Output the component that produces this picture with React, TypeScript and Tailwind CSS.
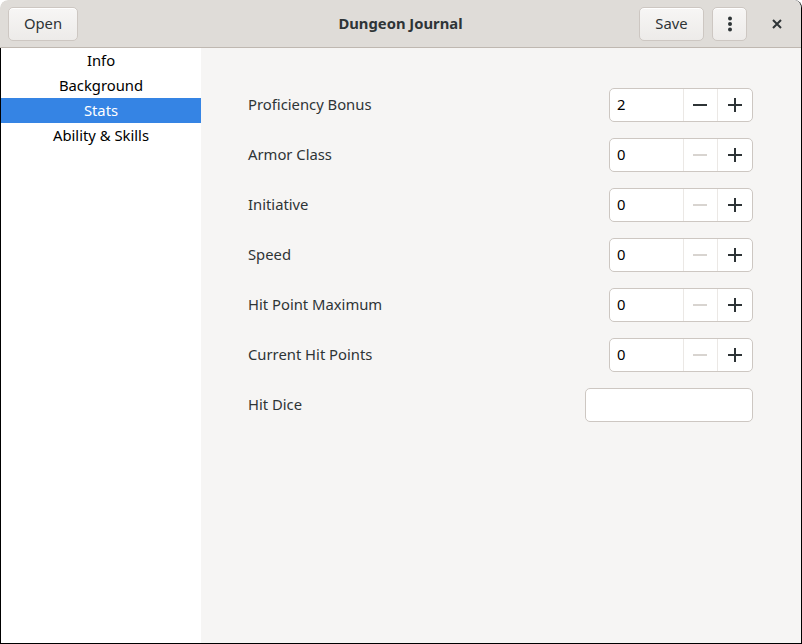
import React from "react";

const font = { fontFamily: '"Noto Sans", "Open Sans", sans-serif' };

const navItems = ["Info", "Background", "Stats", "Ability & Skills"];

const stats = [
  { label: "Proficiency Bonus", value: "2", canDecrease: true },
  { label: "Armor Class", value: "0", canDecrease: false },
  { label: "Initiative", value: "0", canDecrease: false },
  { label: "Speed", value: "0", canDecrease: false },
  { label: "Hit Point Maximum", value: "0", canDecrease: false },
  { label: "Current Hit Points", value: "0", canDecrease: false },
];

const HeaderButton = ({ children, className }: { children: React.ReactNode; className?: string }) => (
  <button
    className={`h-[34px] rounded-[5px] border border-[#cdc7c2] bg-gradient-to-b from-[#f7f6f5] to-[#edebe9] text-[14.8px] text-[#2e3436] shadow-[inset_0_1px_0_#ffffff] ${className ?? ""}`}
  >
    {children}
  </button>
);

const Minus = ({ color }: { color: string }) => (
  <svg width="16" height="16" viewBox="0 0 16 16">
    <path d="M1 8h14" stroke={color} strokeWidth="2" />
  </svg>
);

const Plus = () => (
  <svg width="16" height="16" viewBox="0 0 16 16">
    <path d="M1 8h14M8 1v14" stroke="#2e3436" strokeWidth="2" />
  </svg>
);

const SpinButton = ({ value, canDecrease }: { value: string; canDecrease: boolean }) => (
  <div className="flex h-[34px] w-[144px] rounded-[5px] border border-[#cdc7c2] bg-white">
    <div className="-mt-[1px] flex w-[73px] items-center pl-[7px] text-[14.8px] text-black">{value}</div>
    <div className="flex w-[35px] items-center justify-center border-l border-[#ebe8e5]">
      <Minus color={canDecrease ? "#2e3436" : "#d8d4d0"} />
    </div>
    <div className="flex w-[35px] items-center justify-center border-l border-[#ebe8e5]">
      <Plus />
    </div>
  </div>
);

export default function App() {
  return (
    <div style={font} className="flex h-[644px] w-[802px] flex-col overflow-hidden rounded-t-[8px] border-r border-b border-black bg-white">
      <header className="grid h-[48px] shrink-0 grid-cols-[1fr_auto_1fr] items-center rounded-t-[8px] border-b border-[#bfb8b1] bg-[#dfdcd8] pl-2 pr-[2px]">
        <div>
          <HeaderButton className="w-[70px]">Open</HeaderButton>
        </div>
        <div className="pr-[6px] text-center text-[14.8px] font-bold text-[#2e3436]">Dungeon Journal</div>
        <div className="flex items-center justify-end gap-2">
          <HeaderButton className="w-[65px]">Save</HeaderButton>
          <HeaderButton className="flex w-[35px] items-center justify-center">
            <svg width="4" height="16" viewBox="0 0 4 16" className="mx-auto">
              <circle cx="2" cy="2.5" r="2" fill="#2e3436" />
              <circle cx="2" cy="8" r="2" fill="#2e3436" />
              <circle cx="2" cy="13.5" r="2" fill="#2e3436" />
            </svg>
          </HeaderButton>
          <div className="flex h-[34px] w-[44px] items-center justify-center">
            <svg width="10" height="10" viewBox="0 0 10 10">
              <path d="M1 1l8 8M9 1l-8 8" stroke="#2e3436" strokeWidth="2" />
            </svg>
          </div>
        </div>
      </header>
      <div className="flex flex-1 border-l border-black">
        <nav className="w-[200px] shrink-0 bg-white">
          {navItems.map((item) => (
            <div
              key={item}
              className={`flex h-[25px] items-center justify-center text-[14.8px] ${
                item === "Stats" ? "bg-[#3584e4] text-white" : "text-black"
              }`}
            >
              {item}
            </div>
          ))}
        </nav>
        <main className="flex flex-1 flex-col gap-4 bg-[#f6f5f4] pl-[47px] pr-[48px] pt-10">
          {stats.map((s) => (
            <div key={s.label} className="flex h-[34px] items-center justify-between">
              <span className="-mt-[2px] text-[14.8px] text-[#2e3436]">{s.label}</span>
              <SpinButton value={s.value} canDecrease={s.canDecrease} />
            </div>
          ))}
          <div className="flex h-[34px] items-center justify-between">
            <span className="-mt-[2px] text-[14.8px] text-[#2e3436]">Hit Dice</span>
            <div className="h-[34px] w-[168px] rounded-[5px] border border-[#cdc7c2] bg-white" />
          </div>
        </main>
      </div>
    </div>
  );
}
